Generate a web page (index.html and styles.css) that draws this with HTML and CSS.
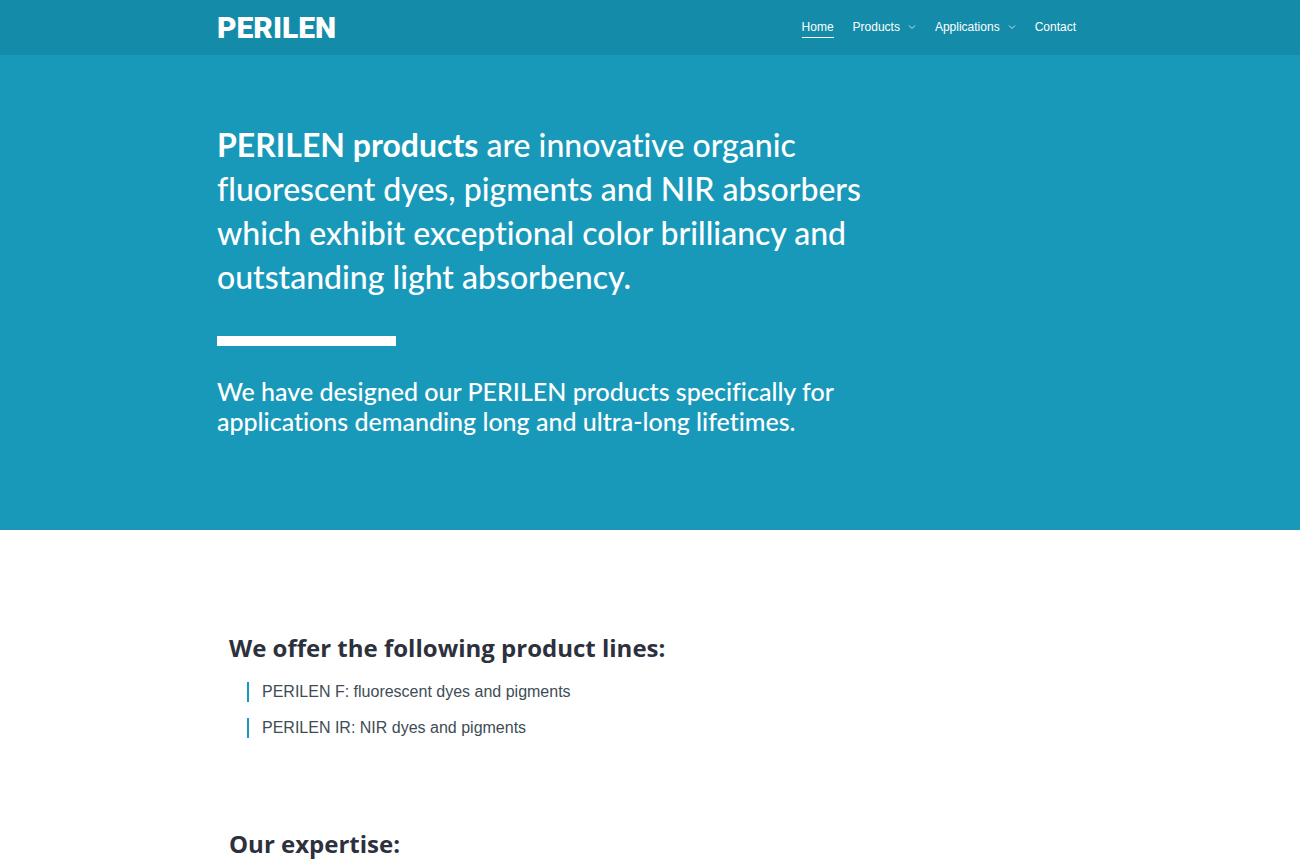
FILE: index.html
```html
<!DOCTYPE html>
<html lang="en">
<head>
<meta charset="utf-8">
<meta name="viewport" content="width=device-width, initial-scale=1">
<title>PERILEN</title>
<link rel="stylesheet" href="styles.css">
</head>
<body>
<header class="site-header">
  <div class="wrap header-row">
    <a class="logo" href="#">PERILEN</a>
    <nav class="nav" aria-label="Main">
      <a class="nav-link nav-current" href="#" aria-current="page">Home</a>
      <a class="nav-link" href="#">Products <svg class="chevron" viewBox="0 0 8 6" aria-hidden="true"><path d="M1 1.5 4 4.5 7 1.5"/></svg></a>
      <a class="nav-link" href="#">Applications <svg class="chevron" viewBox="0 0 8 6" aria-hidden="true"><path d="M1 1.5 4 4.5 7 1.5"/></svg></a>
      <a class="nav-link" href="#">Contact</a>
    </nav>
  </div>
</header>
<main>
  <section class="hero">
    <div class="wrap">
      <h1 class="hero-title"><strong>PERILEN products</strong> are innovative organic<br>fluorescent dyes, pigments and NIR absorbers<br>which exhibit exceptional color brilliancy and<br>outstanding light absorbency.</h1>
      <hr class="hero-rule">
      <p class="hero-text">We have designed our PERILEN products specifically for<br>applications demanding long and ultra-long lifetimes.</p>
    </div>
  </section>
  <div class="wrap content">
    <section>
      <h2 class="heading">We offer the following product lines:</h2>
      <ul class="lines">
        <li class="line">PERILEN F: fluorescent dyes and pigments</li>
        <li class="line">PERILEN IR: NIR dyes and pigments</li>
      </ul>
    </section>
    <section>
      <h2 class="heading">Our expertise:</h2>
    </section>
  </div>
</main>
</body>
</html>
```

FILE: styles.css
```css
* { box-sizing: border-box; }
body {
  margin: 0;
  background: #fff;
  color: #3e4c55;
  font-family: "Liberation Sans", Arial, sans-serif;
  font-size: 16px;
}
.wrap { max-width: 866px; margin: 0 auto; }
.site-header { background: #148ba8; }
.header-row {
  display: flex;
  align-items: center;
  justify-content: space-between;
  height: 55px;
  padding-right: 7px;
}
.logo {
  color: #fff;
  font: 900 30px/32px Roboto, sans-serif;
  text-decoration: none;
}
.nav { display: flex; gap: 19px; }
.nav-link {
  display: flex;
  align-items: center;
  gap: 8px;
  padding-bottom: 1px;
  border-bottom: 1px solid transparent;
  color: #fff;
  font-size: 12px;
  line-height: 18px;
  text-decoration: none;
}
.nav-current { border-color: #fff; }
.chevron {
  width: 8px;
  height: 6px;
  fill: none;
  stroke: #c4e3ea;
  stroke-width: 1;
}
.hero {
  padding: 68px 0 94px;
  background: #1999ba;
  color: #fff;
  font-family: "Trebuchet MS", Lato, sans-serif;
  font-variant-ligatures: none;
}
.hero-title {
  margin: 0;
  font-size: 32px;
  font-weight: 500;
  line-height: 44px;
}
.hero-title strong { font-weight: 700; }
.hero-rule {
  width: 179px;
  height: 10px;
  margin: 37px 0 30px;
  border: 0;
  background: #fff;
}
.hero-text {
  margin: 0;
  font-size: 25px;
  font-weight: 500;
  line-height: 30px;
}
.content { padding: 102px 12px 40px; }
.heading {
  margin: 0;
  color: #2d303d;
  font: 700 24px/32px "Trebuchet MS", "Open Sans", sans-serif;
}
.lines {
  display: grid;
  gap: 16px;
  margin: 18px 0 90px;
  padding: 0 0 0 18px;
  list-style: none;
}
.line {
  padding-left: 13px;
  border-left: 2px solid #1999ba;
  line-height: 20px;
}
```
